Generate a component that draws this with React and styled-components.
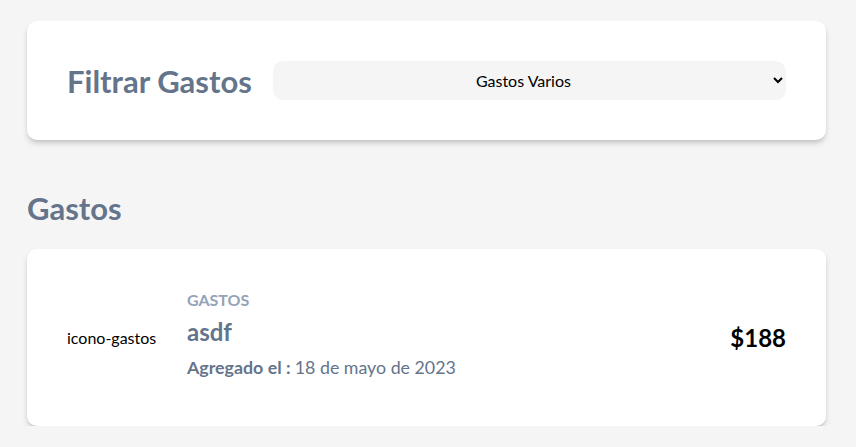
import styled, { createGlobalStyle } from 'styled-components'

const GlobalStyle = createGlobalStyle`
  * { box-sizing: border-box; }
  html, body {
    margin: 0;
    background: #f5f5f5;
    font-family: Lato, "Open Sans", sans-serif;
  }
`

function App() {
  return (
    <>
      <GlobalStyle />
      <Page>
        <FilterCard>
          <FilterForm>
            <FilterTitle>Filtrar Gastos</FilterTitle>
            <Select defaultValue='varios'>
              <option value=''>-- Todas las categorias --</option>
              <option value='varios'>Gastos Varios</option>
            </Select>
          </FilterForm>
        </FilterCard>

        <SectionTitle>Gastos</SectionTitle>

        <ExpenseCard>
          <IconBox>icono-gastos</IconBox>
          <Details>
            <Category>Gastos</Category>
            <Name>asdf</Name>
            <DateLine><b>Agregado el : </b>18 de mayo de 2023</DateLine>
          </Details>
          <Amount>$188</Amount>
        </ExpenseCard>
      </Page>
    </>
  )
}

const Page = styled.main`
  padding: 21px 30px 0 27px;
`

const Card = styled.div`
  background: #fff;
  border-radius: 10px;
  box-shadow: 0 4px 6px -1px rgba(0, 0, 0, 0.18), 0 2px 4px -2px rgba(0, 0, 0, 0.12);
  padding: 40px;
`

const FilterCard = styled(Card)``

const FilterForm = styled.div`
  display: flex;
  align-items: center;
  gap: 21px;
`

const FilterTitle = styled.h2`
  margin: 0;
  font-size: 31px;
  font-weight: 700;
  color: #64748b;
  white-space: nowrap;
`

const Select = styled.select`
  flex: 1;
  height: 39px;
  border: none;
  border-radius: 10px;
  background: #f5f5f5;
  font-family: Lato, sans-serif;
  font-size: 16px;
  color: #000;
  text-align: center;
  padding: 0 8px;
`

const SectionTitle = styled.h2`
  margin: 49px 0 22px;
  font-size: 31px;
  font-weight: 700;
  color: #64748b;
`

const ExpenseCard = styled(Card)`
  display: flex;
  align-items: center;
  min-height: 177px;
`

const IconBox = styled.div`
  width: 120px;
  font-size: 16px;
  color: #000;
`

const Details = styled.div`
  flex: 1;
  display: flex;
  flex-direction: column;
  padding-bottom: 8px;
`

const Category = styled.p`
  margin: 0 0 8px;
  font-size: 16px;
  font-weight: 700;
  text-transform: uppercase;
  color: #94a3b8;
`

const Name = styled.p`
  margin: 0 0 10px;
  font-size: 24px;
  font-weight: 700;
  color: #64748b;
`

const DateLine = styled.p`
  margin: 0;
  font-size: 17.8px;
  color: #64748b;

  b { font-weight: 700; }
`

const Amount = styled.p`
  margin: 0;
  font-size: 24px;
  font-weight: 700;
  color: #000;
`

export default App
